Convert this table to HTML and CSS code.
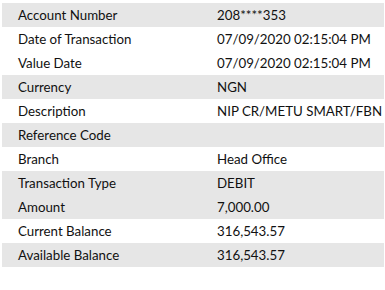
FILE: index.html
```html
<!DOCTYPE html>
<html>
<head>
<meta charset="utf-8">
<link rel="stylesheet" href="styles.css">
</head>
<body>
<div class="details">
  <div class="row shade"><span class="label">Account Number</span><span class="value">208****353</span></div>
  <div class="row"><span class="label">Date of Transaction</span><span class="value">07/09/2020 02:15:04 PM</span></div>
  <div class="row"><span class="label">Value Date</span><span class="value">07/09/2020 02:15:04 PM</span></div>
  <div class="row shade"><span class="label">Currency</span><span class="value">NGN</span></div>
  <div class="row"><span class="label">Description</span><span class="value">NIP CR/METU SMART/FBN</span></div>
  <div class="row shade"><span class="label">Reference Code</span><span class="value"></span></div>
  <div class="row"><span class="label">Branch</span><span class="value">Head Office</span></div>
  <div class="row shade"><span class="label">Transaction Type</span><span class="value">DEBIT</span></div>
  <div class="row shade"><span class="label">Amount</span><span class="value">7,000.00</span></div>
  <div class="row"><span class="label">Current Balance</span><span class="value">316,543.57</span></div>
  <div class="row shade"><span class="label">Available Balance</span><span class="value">316,543.57</span></div>
</div>
</body>
</html>
```
FILE: styles.css
```css
html, body {
  margin: 0;
  padding: 0;
  background: #ffffff;
}
body {
  font-family: Lato, "Open Sans", sans-serif;
  font-size: 13.3px;
  color: #111111;
}
.details {
  display: flex;
  flex-direction: column;
  padding: 3px 1px 0 2px;
}
.row {
  display: grid;
  grid-template-columns: 199px 1fr;
  height: 24px;
  align-items: center;
  padding-left: 16px;
  padding-bottom: 1px;
  box-sizing: border-box;
}
.row.shade {
  background: #e6e6e6;
}
.label, .value {
  white-space: nowrap;
}
```
